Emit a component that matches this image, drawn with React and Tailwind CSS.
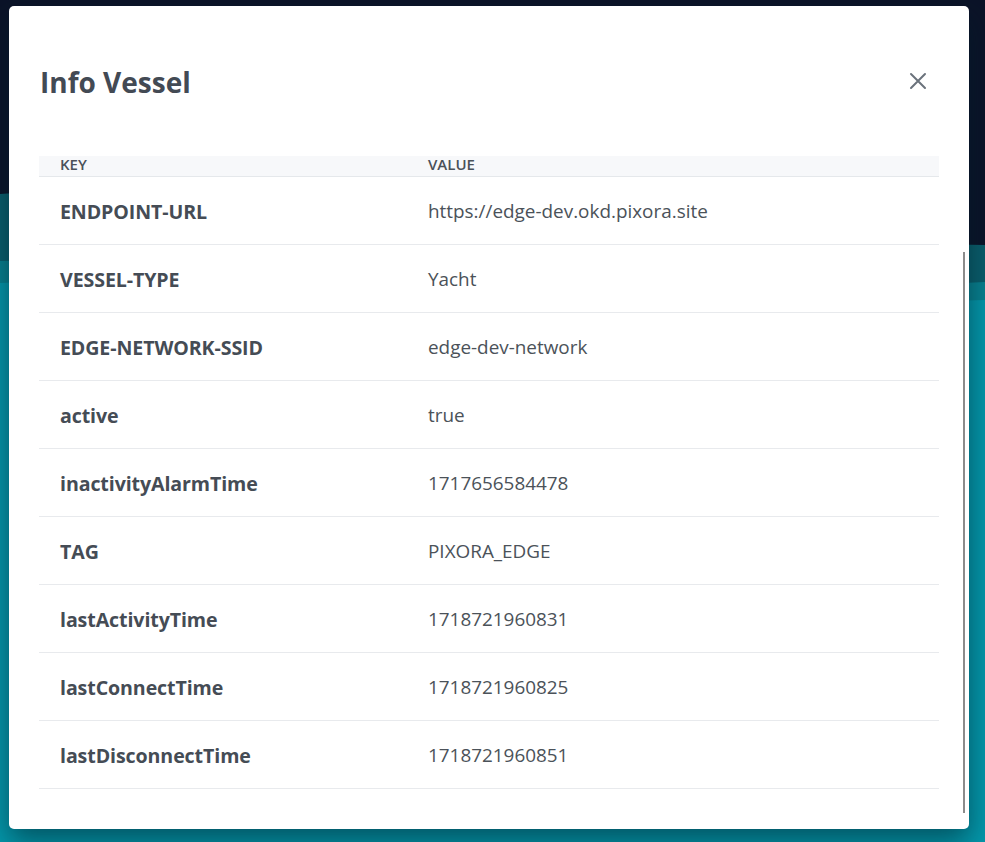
import React from "react";

const rows = [
  { key: "ENDPOINT-URL", value: "https://edge-dev.okd.pixora.site" },
  { key: "VESSEL-TYPE", value: "Yacht" },
  { key: "EDGE-NETWORK-SSID", value: "edge-dev-network" },
  { key: "active", value: "true" },
  { key: "inactivityAlarmTime", value: "1717656584478" },
  { key: "TAG", value: "PIXORA_EDGE" },
  { key: "lastActivityTime", value: "1718721960831" },
  { key: "lastConnectTime", value: "1718721960825" },
  { key: "lastDisconnectTime", value: "1718721960851" },
];

function Backdrop() {
  return (
    <svg
      className="absolute inset-0 h-full w-full"
      viewBox="0 0 985 842"
      preserveAspectRatio="none"
    >
      <rect width="985" height="842" fill="#0b1328" />
      <path d="M0 194 C300 170 650 240 985 245 L985 842 L0 842 Z" fill="#0a5d6b" />
      <path d="M0 261 C300 250 650 300 985 282 L985 842 L0 842 Z" fill="#08808f" />
      <path d="M0 283 C300 270 650 310 985 300 L985 842 L0 842 Z" fill="#0497aa" />
    </svg>
  );
}

function CloseIcon() {
  return (
    <svg width="18" height="18" viewBox="0 0 18 18" fill="none">
      <path d="M2 2 L16 16 M16 2 L2 16" stroke="#6b737c" strokeWidth="2" strokeLinecap="round" />
    </svg>
  );
}

export default function App() {
  return (
    <div
      className="relative h-[842px] w-[985px] overflow-hidden"
      style={{ fontFamily: '"Open Sans", "Noto Sans", sans-serif' }}
    >
      <Backdrop />
      <div className="absolute left-[9px] top-[6px] flex h-[823px] w-[960px] flex-col rounded-[5px] bg-white shadow-[0_12px_28px_rgba(0,30,40,0.55)]">
        <div className="flex h-[150px] items-start justify-between pl-[31px] pr-[42px] pt-[58px]">
          <h1 className="text-[28px] font-bold leading-[36px] text-[#434a54]">
            Info Vessel
          </h1>
          <button className="mt-[8px] p-0">
            <CloseIcon />
          </button>
        </div>
        <div className="relative flex-1 px-[30px]">
          <table className="w-[900px] border-collapse text-left">
            <thead>
              <tr className="border-b border-[#e5e8eb] bg-[#f7f8fa]">
                <th className="h-[20px] w-[368px] px-[21px] pb-[3px] pt-0 text-[15px] font-semibold leading-[17px] text-[#4a5159]">
                  KEY
                </th>
                <th className="h-[20px] px-[21px] pb-[3px] pt-0 text-[15px] font-semibold leading-[17px] text-[#4a5159]">
                  VALUE
                </th>
              </tr>
            </thead>
            <tbody>
              {rows.map((row) => (
                <tr key={row.key} className="h-[68px] border-b border-[#e8eaed]">
                  <td className="px-[21px] pt-[2px] text-[19.6px] font-bold tracking-[-0.1px] text-[#454c55]">
                    {row.key}
                  </td>
                  <td className="px-[21px] pt-[2px] text-[18.9px] text-[#4b5259]">
                    {row.value}
                  </td>
                </tr>
              ))}
            </tbody>
          </table>
          <div className="absolute right-[4px] top-[96px] h-[561px] w-[2px] bg-[#8c8c8c]" />
        </div>
      </div>
    </div>
  );
}
